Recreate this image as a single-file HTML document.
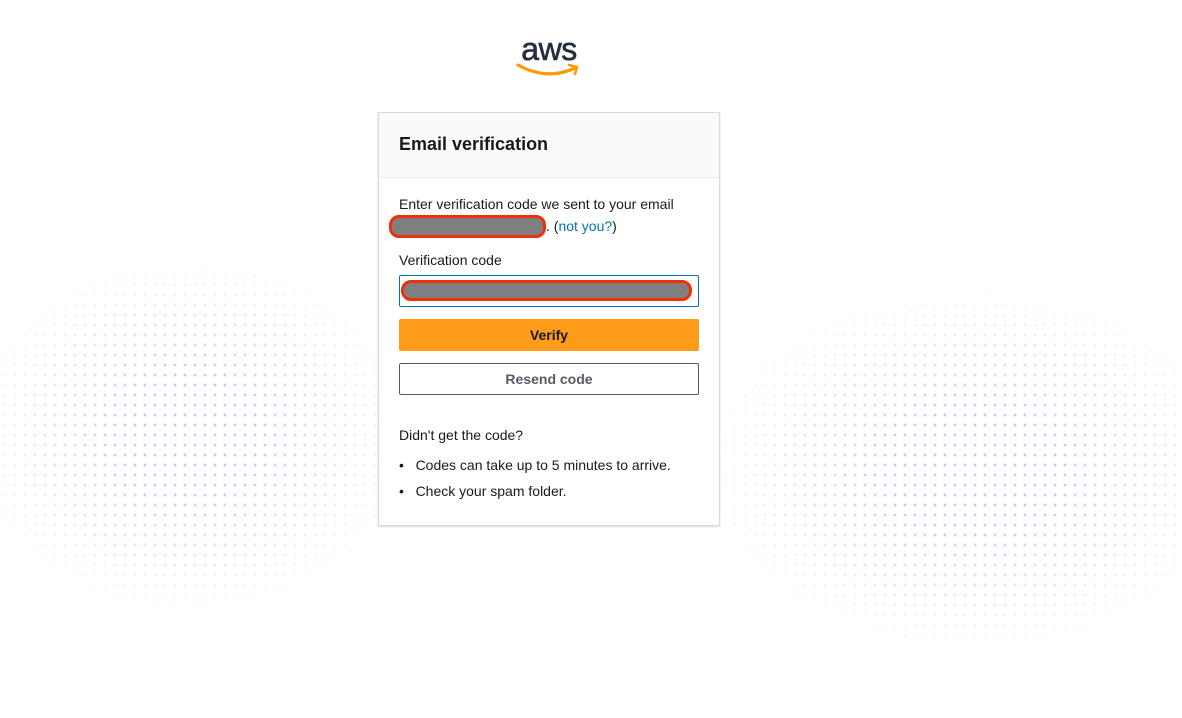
<!DOCTYPE html>
<html><head><style>
body{margin:0;width:1182px;height:718px;background:#fff;font-family:"Liberation Sans",sans-serif;position:relative;overflow:hidden;color:#16191f}
.dots{position:absolute;background-image:radial-gradient(circle,#8fa8f0 1.2px,transparent 1.7px);background-size:10px 10px;opacity:.55}
.card{position:absolute;left:378px;top:112px;width:340px;height:412px;border:1px solid #d5dbdb;background:#fff;box-shadow:0 1px 2px rgba(0,0,0,.15)}
.hd{height:64px;background:#fafafa;border-bottom:1px solid #eaeded;font-weight:bold;font-size:18px;padding-left:20px;line-height:62px}
.p{position:absolute;left:20px;font-size:14px}
.red{position:absolute;background:#7f7f7f;border:3px solid #f0300a;border-radius:10px;box-sizing:border-box}
</style></head><body>
<div class="dots" style="left:0;top:230px;width:380px;height:410px;-webkit-mask-image:radial-gradient(ellipse 60% 45% at 50% 50%,#000 30%,transparent 100%);mask-image:radial-gradient(ellipse 60% 45% at 50% 50%,#000 30%,transparent 100%)"></div>
<div class="dots" style="left:720px;top:210px;width:462px;height:470px;-webkit-mask-image:radial-gradient(ellipse 60% 40% at 55% 55%,#000 30%,transparent 100%);mask-image:radial-gradient(ellipse 60% 40% at 55% 55%,#000 30%,transparent 100%)"></div>
<svg style="position:absolute;left:514px;top:32px" width="70" height="46" viewBox="0 0 70 46">
<text x="35" y="28" text-anchor="middle" font-family="Liberation Sans" font-size="32" fill="#232f3e" stroke="#232f3e" stroke-width="0.6" letter-spacing="-0.5">aws</text>
<path d="M4 33 Q33 49 61 36" stroke="#ff9900" stroke-width="3.2" fill="none" stroke-linecap="round"/>
<path d="M55 33 L63 35 L61 42" stroke="#ff9900" stroke-width="2.6" fill="none" stroke-linecap="round"/>
</svg>
<div class="card">
<div class="hd">Email verification</div>
<div class="p" style="top:83px">Enter verification code we sent to your email</div>
<div class="red" style="left:10px;top:102px;width:157px;height:23px"></div>
<div class="p" style="top:105px;left:167px">. (<span style="color:#0073bb">not you?</span>)</div>
<div class="p" style="top:139px">Verification code</div>
<div style="position:absolute;left:20px;top:162px;width:298px;height:30px;border:1px solid #0073bb;border-radius:2px"></div>
<div class="red" style="left:22px;top:167px;width:291px;height:21px"></div>
<div style="position:absolute;left:20px;top:206px;width:300px;height:32px;background:#fe9b1a;border-radius:2px;text-align:center;line-height:32px;font-weight:bold;font-size:14px">Verify</div>
<div style="position:absolute;left:20px;top:250px;width:298px;height:30px;border:1px solid #545b64;border-radius:2px;text-align:center;line-height:30px;font-weight:bold;font-size:14px;color:#545b64">Resend code</div>
<div class="p" style="top:314px">Didn't get the code?</div>
<div class="p" style="top:344px">•&nbsp;&nbsp; Codes can take up to 5 minutes to arrive.</div>
<div class="p" style="top:370px">•&nbsp;&nbsp; Check your spam folder.</div>
</div>
</body></html>
